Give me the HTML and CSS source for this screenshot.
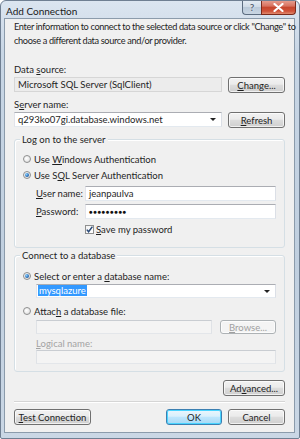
FILE: index.html
```html
<!DOCTYPE html>
<html>
<head>
<meta charset="utf-8">
<link rel="stylesheet" href="styles.css">
</head>
<body>
<div class="window">
  <div class="titlebar">
    <span class="title">Add Connection</span>
    <div class="caption-buttons">
      <span class="cbtn help">?</span>
      <span class="cbtn close"><svg width="11" height="9" viewBox="0 0 11 9"><path d="M1.5 1 L9.5 8 M9.5 1 L1.5 8" stroke="#fff" stroke-width="2.2" stroke-linecap="round"/></svg></span>
    </div>
  </div>
  <div class="client">
    <p class="intro">Enter information to connect to the selected data source or click "Change" to<br>choose a different data source and/or provider.</p>

    <div class="label lbl-ds">Data <u>s</u>ource:</div>
    <div class="row">
      <div class="box readonly">Microsoft SQL Server (SqlClient)</div>
      <button class="btn side"><u>C</u>hange...</button>
    </div>

    <div class="label lbl-srv">S<u>e</u>rver name:</div>
    <div class="row">
      <div class="box combo">q293ko07gi.database.windows.net<span class="arrow"></span></div>
      <button class="btn side"><u>R</u>efresh</button>
    </div>

    <div class="group g1">
      <div class="legend">Log on to the server</div>
      <div class="opt first"><span class="radio"></span><span>Use <u>W</u>indows Authentication</span></div>
      <div class="opt"><span class="radio on"></span><span>Use S<u>Q</u>L Server Authentication</span></div>
      <div class="field f-user"><span class="flabel"><u>U</u>ser name:</span><div class="box text">jeanpaulva</div></div>
      <div class="field f-pass"><span class="flabel"><u>P</u>assword:</span><div class="box text dots">●●●●●●●●●</div></div>
      <div class="check-row"><span class="check"><svg width="9" height="9" viewBox="0 0 9 9"><path d="M1.8 4.6 L3.6 6.8 L7.4 1.6" fill="none" stroke="#2a4a78" stroke-width="1.5"/></svg></span><span><u>S</u>ave my password</span></div>
    </div>

    <div class="group g2">
      <div class="legend">Connect to a database</div>
      <div class="opt first"><span class="radio on"></span><span>Select or enter a <u>d</u>atabase name:</span></div>
      <div class="indent"><div class="box combo db"><span class="sel">mysqlazure</span><span class="arrow"></span></div></div>
      <div class="opt opt2"><span class="radio"></span><span>Attac<u>h</u> a database file:</span></div>
      <div class="indent attach">
        <div class="box disabled"></div>
        <button class="btn browse" disabled><u>B</u>rowse...</button>
      </div>
      <div class="indent dlabel"><u>L</u>ogical name:</div>
      <div class="indent"><div class="box disabled full"></div></div>
    </div>

    <div class="adv-row"><button class="btn adv">Ad<u>v</u>anced...</button></div>
    <div class="sep"></div>
    <div class="bottom-row">
      <button class="btn test"><u>T</u>est Connection</button>
      <div class="right-btns">
        <button class="btn ok">OK</button>
        <button class="btn cancel">Cancel</button>
      </div>
    </div>
  </div>
</div>
</body>
</html>
```

FILE: styles.css
```css
* { box-sizing: border-box; }
html, body { margin: 0; padding: 0; background: #fff; }
body {
  font-family: "Lato", "Noto Sans", sans-serif;
  font-size: 9.5px;
  color: #1e1e1e;
}
u { text-decoration: underline; text-underline-offset: 1px; }

.window {
  width: 300px;
  height: 439px;
  border: 1px solid #6f7f92;
  border-radius: 6px 6px 2px 2px;
  background: linear-gradient(180deg, #dbe5f0 0%, #c8d6e5 12%, #c0cfdf 60%, #cad7e5 100%);
  padding: 0 4px 5px 3px;
  display: flex;
  flex-direction: column;
  overflow: hidden;
}
.titlebar {
  height: 17px;
  display: flex;
  align-items: flex-start;
  justify-content: space-between;
  flex: none;
}
.title {
  font-size: 10px;
  color: #1a1a1a;
  padding: 4px 0 0 2px;
}
.caption-buttons { display: flex; margin-right: -1px; margin-top: -1px; }
.cbtn {
  height: 15px;
  display: flex;
  align-items: center;
  justify-content: center;
  border: 1px solid #5c6c80;
  border-top: none;
}
.help {
  width: 19px;
  border-radius: 0 0 0 4px;
  border-right: none;
  background: linear-gradient(180deg, #e6edf5 0%, #cfdae6 50%, #b9c8d8 51%, #c9d6e3 100%);
  color: #5a6677;
  font-size: 10px;
  font-weight: bold;
  text-shadow: 0 0 2px #fff;
}
.close {
  width: 35px;
  border-radius: 0 0 4px 0;
  background: linear-gradient(180deg, #e8a496 0%, #d7705d 45%, #c5452c 50%, #d0533a 80%, #e08a6e 100%);
  border-color: #7a2a1c;
}

.client {
  flex: 1;
  background: #f0f0f0;
  border: 1px solid #8b9bab;
  padding: 0 9px 0 9px;
  display: flex;
  flex-direction: column;
}
.intro {
  margin: 1px 0 0 0;
  line-height: 14px;
  white-space: nowrap;
  font-size: 9.2px;
  letter-spacing: -0.35px;
}
.label { line-height: 14px; height: 14px; }
.lbl-ds { margin-top: 15px; }
.lbl-srv { margin-top: 6px; }
.row {
  display: flex;
  justify-content: space-between;
  height: 15px;
}
.box {
  position: relative;
  height: 15px;
  line-height: 13px;
  padding: 0 3px;
  background: #fff;
  border: 1px solid #abadb3;
  border-color: #abadb3 #dbdfe6 #e3e9ef #e2e3ea;
  white-space: nowrap;
  overflow: hidden;
}
.row .box { width: 208px; }
.readonly {
  background: #ececec;
  border-color: #d6d6d6;
}
.combo { padding-right: 14px; }
.arrow {
  position: absolute;
  right: 5px;
  top: 5px;
  width: 0; height: 0;
  border-left: 3px solid transparent;
  border-right: 3px solid transparent;
  border-top: 3px solid #222;
}

.btn {
  font-family: inherit;
  font-size: 9.5px;
  color: #1e1e1e;
  height: 16px;
  padding: 0;
  border: 1px solid #707070;
  border-radius: 3px;
  background: linear-gradient(180deg, #f2f2f2 0%, #ebebeb 45%, #dddddd 50%, #cfcfcf 100%);
  box-shadow: inset 0 0 0 1px rgba(255,255,255,0.7);
  line-height: 13px;
}
.btn.side { width: 57px; }
.btn:disabled {
  color: #a0a0a0;
  border-color: #adb2b5;
  background: #f4f4f4;
}

.group {
  border: 1px solid #d5dfe5;
  border-radius: 3px;
  box-shadow: inset 1px 1px 0 #fff;
  padding: 0 8px 0 8px;
  display: flex;
  flex-direction: column;
}
.g1 { margin-top: 12px; padding-bottom: 11px; }
.g2 { margin-top: 7px; padding-bottom: 7px; }
.legend {
  margin-top: -7px;
  margin-left: -3px;
  padding: 0 2px;
  height: 14px;
  line-height: 14px;
  background: #f0f0f0;
  align-self: flex-start;
}
.opt {
  height: 16px;
  display: flex;
  align-items: center;
  gap: 3px;
}
.g1 .opt.first { margin-top: 4px; }
.g2 .opt.first { margin-top: 5px; }
.radio {
  width: 8px;
  height: 8px;
  border-radius: 50%;
  border: 1px solid #8e8f8f;
  background: radial-gradient(circle at 40% 40%, #ffffff 0%, #e8e8e8 60%, #cfcfcf 100%);
  position: relative;
  flex: none;
}
.radio.on::after {
  content: "";
  position: absolute;
  left: 1px; top: 1px;
  width: 4px; height: 4px;
  border-radius: 50%;
  background: radial-gradient(circle at 35% 35%, #8ad0ff 0%, #2a6fb8 60%, #1a3f78 100%);
}

.field {
  display: flex;
  align-items: center;
  padding-left: 13px;
  margin-top: 3px;
}
.flabel { width: 49px; flex: none; white-space: nowrap; }
.field .box { flex: 1; }
.dots { font-size: 6px; letter-spacing: 0.6px; line-height: 13px; color: #111; }
.check-row {
  margin-top: 3px;
  padding-left: 62px;
  height: 14px;
  display: flex;
  align-items: center;
  gap: 2px;
}
.check {
  width: 9px;
  height: 9px;
  border: 1px solid #8f8f8f;
  background: linear-gradient(135deg, #f2f2f2, #ffffff);
  display: flex;
  align-items: center;
  justify-content: center;
  flex: none;
}
.check svg { margin: -1px; }

.indent { padding-left: 13px; }
.db { height: 14px; line-height: 12px; padding-left: 1px; }
.sel { background: #3399ff; color: #fff; padding: 0 1px; }
.opt2 { margin-top: 5px; }
.attach {
  display: flex;
  justify-content: space-between;
  margin-top: 1px;
}
.attach .box { width: 176px; height: 14px; }
.disabled {
  background: #f4f4f4;
  border-color: #c9cdd2 #dfe2e6 #e3e6ea #dfe2e6;
}
.btn.browse { width: 56px; height: 14px; line-height: 11px; }
.dlabel { color: #a3a3a3; margin-top: 4px; line-height: 12px; height: 12px; }
.full { width: 100%; height: 14px; }

.adv-row { display: flex; justify-content: flex-end; margin-top: 8px; }
.btn.adv { width: 62px; }
.sep {
  margin-top: 5px;
  height: 2px;
  border-top: 1px solid #d5d5d5;
  border-bottom: 1px solid #fff;
}
.bottom-row {
  display: flex;
  justify-content: space-between;
  margin-top: 6px;
}
.btn.test { width: 77px; }
.right-btns { display: flex; gap: 6px; }
.btn.ok {
  width: 56px;
  border-color: #3c7fb1;
  background: linear-gradient(180deg, #eaf6fd 0%, #d9f0fc 45%, #bee6fd 50%, #a7d9f5 100%);
  box-shadow: inset 0 0 0 1px #48d4ff;
}
.btn.cancel { width: 57px; }
```
